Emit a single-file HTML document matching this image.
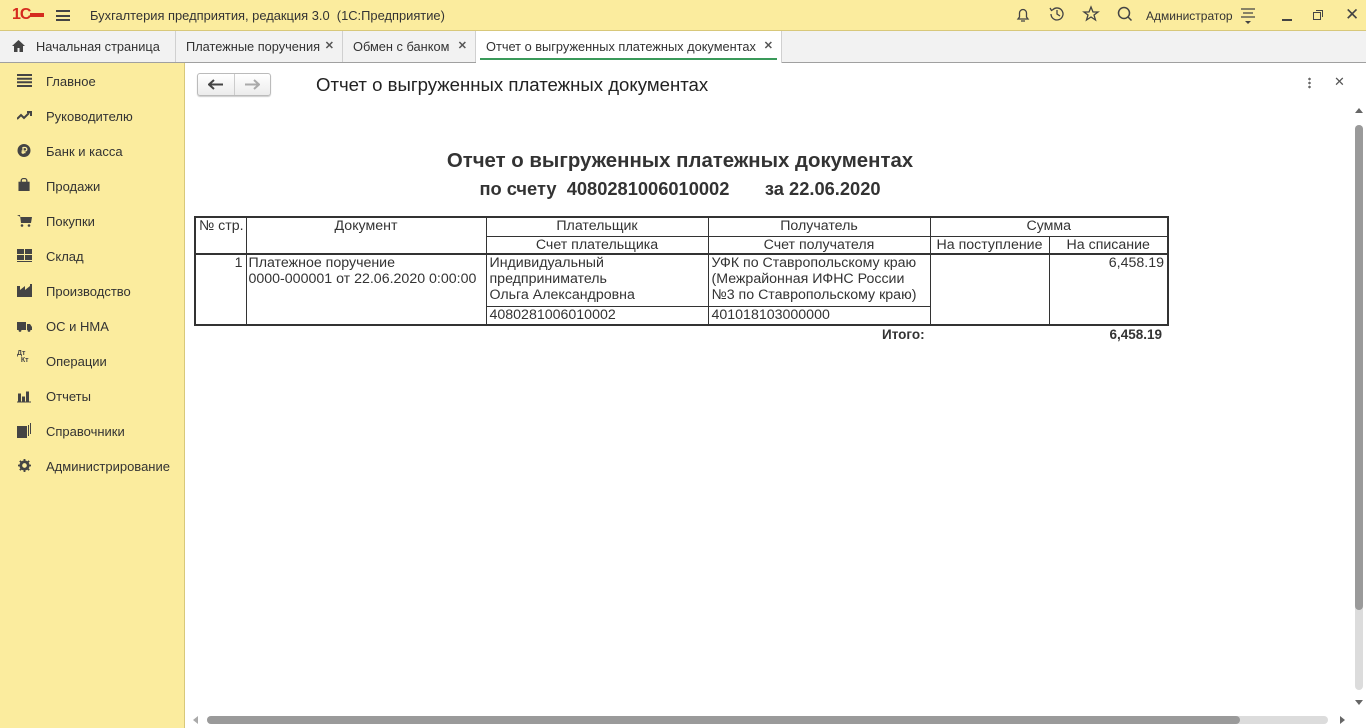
<!DOCTYPE html>
<html><head><meta charset="utf-8"><style>
*{margin:0;padding:0;box-sizing:border-box}
body{width:1366px;height:728px;overflow:hidden;background:#fff;font-family:"Liberation Sans",Arial,sans-serif;font-size:13px;color:#333;position:relative}
.abs{position:absolute}
#top{left:0;top:0;width:1366px;height:31px;background:#fbec9e;border-bottom:1px solid #d8c87a}
#tabs{left:0;top:31px;width:1366px;height:32px;background:#f2f2f2;border-bottom:1px solid #a0a0a0}
.tab{position:absolute;top:0;height:31px;line-height:31px;padding-left:10px;border-right:1px solid #d0d0d0;font-size:12.8px;color:#333;white-space:nowrap}
#side{left:0;top:63px;width:185px;height:665px;background:#fbec9e;border-right:1px solid #d8c87a}
.mi{position:absolute;left:46px;font-size:13px;color:#333}
.ic{position:absolute;left:17px;width:15px;height:13px}
table{border-collapse:collapse;position:absolute;left:194px;top:216px;font-size:14.2px;color:#333;table-layout:fixed;width:973px}
td{border:1px solid #333;padding:0 3px;line-height:16px;vertical-align:top;white-space:nowrap;overflow:hidden}
</style></head><body>
<div id="top" class="abs">
 <div class="abs" style="left:12px;top:6px;color:#d52b1e;font-weight:bold;font-size:16px;letter-spacing:-1px">1<span style="font-size:16px">С</span><span style="display:inline-block;width:14px;height:3px;border-top:2px solid #d52b1e;border-bottom:2px solid #d52b1e;vertical-align:middle"></span></div>
 <div class="abs" style="left:56px;top:10px;width:14px;height:11px;border-top:2px solid #444;border-bottom:2px solid #444"><div style="margin-top:2.5px;height:2px;background:#444"></div></div>
 <div class="abs" style="left:90px;top:8px;font-size:12.9px;color:#333">Бухгалтерия предприятия, редакция 3.0 &nbsp;(1С:Предприятие)</div>
 <svg class="abs" style="left:1014px;top:6px" width="18" height="18" viewBox="0 0 18 18" fill="none" stroke="#444" stroke-width="1.3"><path d="M4 13h10l-1.5-2V7a3.5 3.5 0 0 0-7 0v4z M7 15h4"/></svg>
 <svg class="abs" style="left:1048px;top:5px" width="18" height="18" viewBox="0 0 18 18" fill="none" stroke="#444" stroke-width="1.3"><path d="M3 9a6 6 0 1 0 2-4.5 M2 3l1.5 2.5L6 4 M9 5v4l3 2"/></svg>
 <svg class="abs" style="left:1082px;top:5px" width="18" height="18" viewBox="0 0 18 18" fill="none" stroke="#444" stroke-width="1.3"><path d="M9 2l2 5h5l-4 3 1.5 5L9 12l-4.5 3L6 10 2 7h5z"/></svg>
 <svg class="abs" style="left:1116px;top:5px" width="18" height="18" viewBox="0 0 18 18" fill="none" stroke="#444" stroke-width="1.5"><circle cx="8" cy="8" r="5.5"/><path d="M12 12l3.5 3.5"/></svg>
 <div class="abs" style="left:1146px;top:9px;font-size:12px;color:#333">Администратор</div>
 <svg class="abs" style="left:1240px;top:7px" width="16" height="18" viewBox="0 0 16 18" stroke="#444" stroke-width="1.3"><path d="M1 2h14M3 6h10M1 10h14"/><path d="M5 14h6l-3 3z" fill="#444" stroke="none"/></svg>
 <div class="abs" style="left:1282px;top:19px;width:10px;height:1.5px;background:#444"></div>
 <div class="abs" style="left:1313px;top:12px;width:8px;height:8px;border:1.5px solid #444"></div>
 <div class="abs" style="left:1316px;top:10px;width:7px;height:7px;border-top:1.5px solid #444;border-right:1.5px solid #444"></div>
 <div class="abs" style="left:1345px;top:5px;font-size:17px;color:#444">✕</div>
</div>
<div id="tabs" class="abs">
 <div class="tab" style="left:0;width:176px;padding-left:36px">Начальная страница</div>
 <svg class="abs" style="left:11px;top:8px" width="15" height="14" viewBox="0 0 15 14"><path d="M7.5 1L1 7h2v6h3.5V9h2v4H12V7h2z" fill="#444"/></svg>
 <div class="tab" style="left:176px;width:167px">Платежные поручения <span style="position:absolute;right:8px;font-size:11px;font-weight:bold;color:#555">✕</span></div>
 <div class="tab" style="left:343px;width:133px">Обмен с банком <span style="position:absolute;right:8px;font-size:11px;font-weight:bold;color:#555">✕</span></div>
 <div class="tab" style="left:476px;width:306px;background:#fff;height:32px;border-bottom:none">Отчет о выгруженных платежных документах <span style="position:absolute;right:8px;font-size:11px;font-weight:bold;color:#555">✕</span><div style="position:absolute;left:4px;right:4px;bottom:3px;height:2px;background:#3a9a5a"></div></div>
</div>
<div id="side" class="abs">
 <svg class="ic" style="top:11px" viewBox="0 0 15 13"><path d="M0 1h15M0 4.7h15M0 8.3h15M0 12h15" stroke="#444" stroke-width="2"/></svg><div class="mi" style="top:11px">Главное</div>
 <svg class="ic" style="top:46px" viewBox="0 0 15 13"><path d="M0 10l4-4 3 3 5-5M10 3h4v4" stroke="#444" stroke-width="2" fill="none"/></svg><div class="mi" style="top:46px">Руководителю</div>
 <svg class="ic" style="top:81px" viewBox="0 0 15 13"><circle cx="7" cy="6.5" r="6.5" fill="#444"/><path d="M6 3v7M6 3.5h2a1.8 1.8 0 0 1 0 3.6H4.5M4.5 8.6h4" stroke="#fbec9e" stroke-width="1.3" fill="none"/></svg><div class="mi" style="top:81px">Банк и касса</div>
 <svg class="ic" style="top:115px" viewBox="0 0 15 14"><path d="M1 4h12v10H1z" fill="#444"/><path d="M4 5V2.5a3 2 0 0 1 6 0V5" stroke="#444" stroke-width="1.4" fill="none"/></svg><div class="mi" style="top:116px">Продажи</div>
 <svg class="ic" style="top:151px" viewBox="0 0 15 13"><path d="M0 1h3l1 8h10l1-6H3.5" fill="#444"/><circle cx="5" cy="11.5" r="1.3" fill="#444"/><circle cx="12" cy="11.5" r="1.3" fill="#444"/></svg><div class="mi" style="top:151px">Покупки</div>
 <svg class="ic" style="top:186px" viewBox="0 0 15 13"><path d="M0 0h7v5H0zM8 0h7v5H8zM0 6h7v5H0zM8 6h7v5H8zM0 12h15v1H0z" fill="#444"/></svg><div class="mi" style="top:186px">Склад</div>
 <svg class="ic" style="top:221px" viewBox="0 0 15 13"><path d="M0 13V2h3v4l5-4v4l5-4V0h2v13z" fill="#444"/></svg><div class="mi" style="top:221px">Производство</div>
 <svg class="ic" style="top:257px" viewBox="0 0 15 11"><path d="M0 1h9v8H0zM10 3h3l2 3v3h-5z" fill="#444"/><circle cx="3" cy="9.5" r="1.4" fill="#444"/><circle cx="12" cy="9.5" r="1.4" fill="#444"/></svg><div class="mi" style="top:256px">ОС и НМА</div>
 <div class="abs" style="left:17px;top:287px;font-size:7px;font-weight:bold;color:#444;line-height:7px">Дт<br>&nbsp;&nbsp;Кт</div><div class="mi" style="top:291px">Операции</div>
 <svg class="ic" style="top:327px" viewBox="0 0 15 12"><path d="M1 3h3v8H1zM5 6h3v5H5zM9 1h3v10H9zM0 11h14v1H0z" fill="#444"/></svg><div class="mi" style="top:326px">Отчеты</div>
 <svg class="ic" style="top:360px;height:15px" viewBox="0 0 15 15"><path d="M0 3h10v12H0z" fill="#444"/><path d="M11.5 2v11M13.5 0v11" stroke="#444" stroke-width="1"/></svg><div class="mi" style="top:361px">Справочники</div>
 <svg class="ic" style="top:396px" viewBox="0 0 14 14"><circle cx="7" cy="7" r="4" fill="none" stroke="#444" stroke-width="3"/><path d="M7 0v3M7 11v3M0 7h3M11 7h3M2 2l2 2M10 10l2 2M12 2l-2 2M2 12l2-2" stroke="#444" stroke-width="2"/></svg><div class="mi" style="top:396px">Администрирование</div>
</div>
<!-- nav buttons -->
<div class="abs" style="left:197px;top:73px;width:74px;height:23px;border:1px solid #bbb;border-radius:3px;background:linear-gradient(#fff,#ececec);box-shadow:0 1px 1px #ccc"><div style="position:absolute;left:36px;top:0;width:1px;height:21px;background:#ccc"></div></div>
<svg class="abs" style="left:208px;top:79px" width="16" height="11" viewBox="0 0 16 11"><path d="M1 5.5h14M6 1L1 5.5 6 10" stroke="#444" stroke-width="2" fill="none"/></svg>
<svg class="abs" style="left:244px;top:79px" width="16" height="11" viewBox="0 0 16 11"><path d="M1 5.5h14M10 1l5 4.5-5 4.5" stroke="#aaa" stroke-width="2" fill="none"/></svg>
<div class="abs" style="left:316px;top:74px;font-size:18.6px;color:#222">Отчет о выгруженных платежных документах</div>
<div class="abs" style="left:1308px;top:77px;width:3px;height:12px;background:radial-gradient(circle,#666 1.2px,transparent 1.4px) 0 0/3px 4px"></div>
<div class="abs" style="left:1334px;top:74px;font-size:13px;color:#555">✕</div>
<!-- report -->
<div class="abs" style="left:330px;top:150px;width:700px;text-align:center;font-size:20.4px;font-weight:bold;color:#333">Отчет о выгруженных платежных документах</div>
<div class="abs" style="left:330px;top:178px;width:700px;text-align:center;font-size:18.3px;font-weight:bold;color:#333">по счету &nbsp;4080281006010002 &nbsp; &nbsp; &nbsp; за 22.06.2020</div>
<table>
<colgroup><col style="width:51px"><col style="width:240px"><col style="width:222px"><col style="width:222px"><col style="width:119px"><col style="width:119px"></colgroup>
<tr style="height:19px"><td rowspan="2" style="border-left:2px solid #333;border-top:2px solid #333">№ стр.</td><td rowspan="2" style="text-align:center;border-top:2px solid #333">Документ</td><td style="text-align:center;border-top:2px solid #333">Плательщик</td><td style="text-align:center;border-top:2px solid #333">Получатель</td><td colspan="2" style="text-align:center;border-top:2px solid #333;border-right:2px solid #333">Сумма</td></tr>
<tr style="height:18px"><td style="text-align:center">Счет плательщика</td><td style="text-align:center">Счет получателя</td><td style="text-align:center">На поступление</td><td style="text-align:center;border-right:2px solid #333">На списание</td></tr>
<tr style="height:52px"><td rowspan="2" style="text-align:right;border-left:2px solid #333;border-top:2px solid #333;border-bottom:2px solid #333">1</td><td rowspan="2" style="border-top:2px solid #333;border-bottom:2px solid #333;padding-left:2px">Платежное поручение<br>0000-000001 от 22.06.2020 0:00:00</td><td style="border-top:2px solid #333">Индивидуальный<br>предприниматель<br>Ольга Александровна</td><td style="border-top:2px solid #333">УФК по Ставропольскому краю<br>(Межрайонная ИФНС России<br>№3 по Ставропольскому краю)</td><td rowspan="2" style="border-top:2px solid #333;border-bottom:2px solid #333"></td><td rowspan="2" style="text-align:right;border-top:2px solid #333;border-bottom:2px solid #333;border-right:2px solid #333">6,458.19</td></tr>
<tr style="height:19px"><td style="border-bottom:2px solid #333">4080281006010002</td><td style="border-bottom:2px solid #333">401018103000000</td></tr>
</table>
<div class="abs" style="left:882px;top:327px;font-weight:bold;font-size:13.5px;color:#333">Итого:</div>
<div class="abs" style="left:1040px;top:327px;width:122px;text-align:right;font-weight:bold;font-size:13.5px;color:#333">6,458.19</div>
<!-- scrollbars -->
<div class="abs" style="left:1355px;top:108px;width:0;height:0;border-left:4px solid transparent;border-right:4px solid transparent;border-bottom:5px solid #666"></div>
<div class="abs" style="left:1355px;top:125px;width:8px;height:565px;background:#dcdcdc;border-radius:4px"></div>
<div class="abs" style="left:1355px;top:125px;width:8px;height:485px;background:#9a9a9a;border-radius:4px"></div>
<div class="abs" style="left:1355px;top:700px;width:0;height:0;border-left:4px solid transparent;border-right:4px solid transparent;border-top:5px solid #666"></div>
<div class="abs" style="left:193px;top:716px;width:0;height:0;border-top:4px solid transparent;border-bottom:4px solid transparent;border-right:5px solid #aaa"></div>
<div class="abs" style="left:207px;top:716px;width:1121px;height:8px;background:#dcdcdc;border-radius:4px"></div>
<div class="abs" style="left:207px;top:716px;width:1033px;height:8px;background:#9a9a9a;border-radius:4px"></div>
<div class="abs" style="left:1340px;top:716px;width:0;height:0;border-top:4px solid transparent;border-bottom:4px solid transparent;border-left:5px solid #666"></div>
</body></html>
